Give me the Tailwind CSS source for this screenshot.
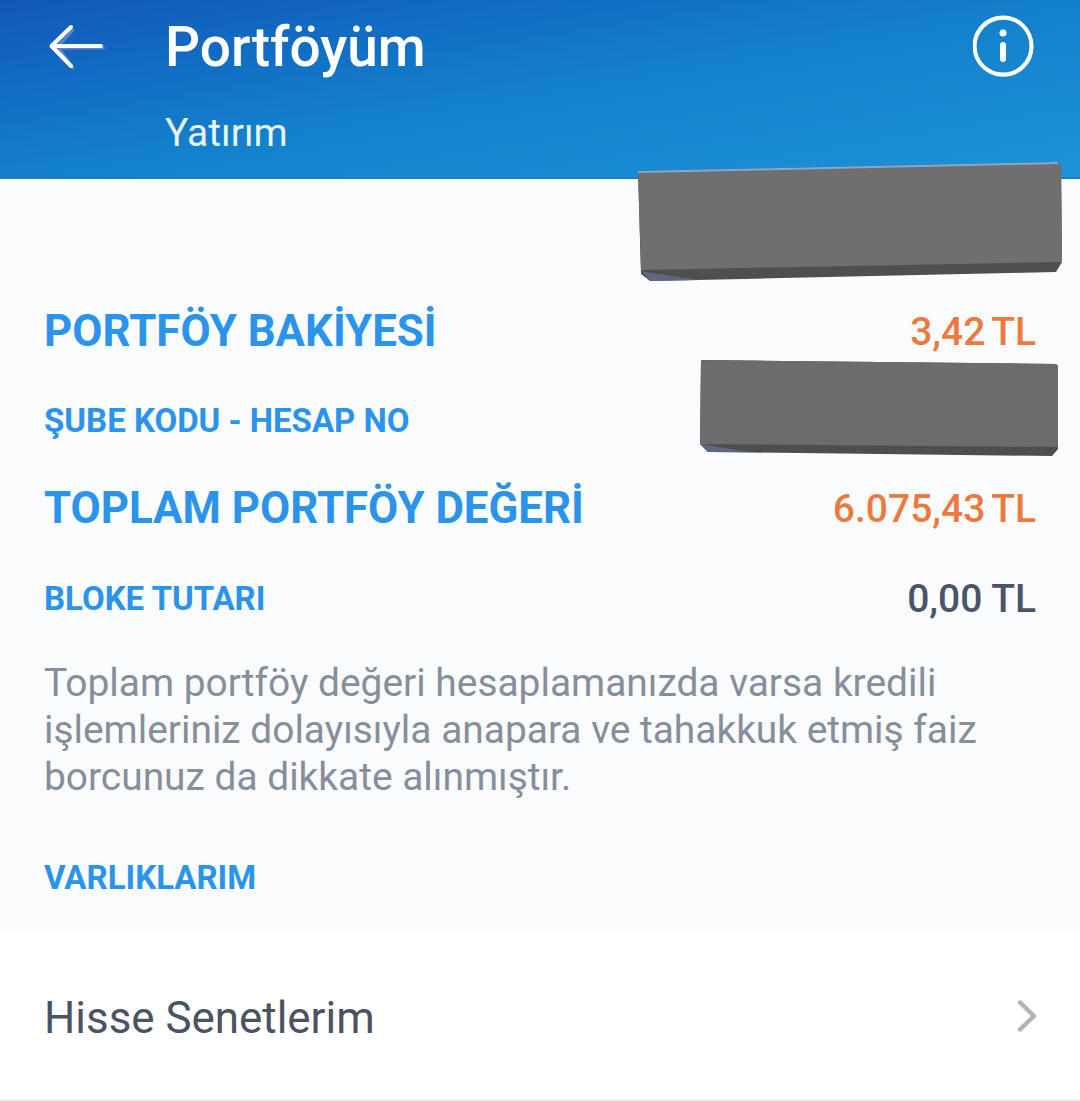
<!DOCTYPE html>
<html lang="tr">
	<head>
		<meta charset="UTF-8" />
		<meta name="viewport" content="width=device-width, initial-scale=1.0" />
		<title>Portföyüm</title>
		<script src="https://cdn.jsdelivr.net/npm/@tailwindcss/browser@4"></script>
	</head>
	<body class="bg-white font-['Roboto',sans-serif]">
		<div class="relative w-[1080px] h-[1101px] overflow-hidden">
			<!-- Header -->
			<header class="h-[179px] bg-gradient-to-br from-[#1257b8] via-[#1480cc] to-[#1c93d8] border-b-2 border-[#1b7fb8] flex items-start">
				<div class="w-[166px] pl-[46px] pt-[21px] shrink-0">
					<svg width="64" height="52" viewBox="0 0 64 52" fill="none" stroke-linecap="round" stroke-linejoin="round">
						<g stroke="#5b86cf" stroke-width="3">
							<path d="M57.500 27H12" />
							<path d="M27 9 12 25" />
							<path d="M14 29 27 47" />
						</g>
						<g stroke="#fff" stroke-width="4">
							<path d="M55 25H6" />
							<path d="M25 6 5.500 25 25 45" />
						</g>
					</svg>
				</div>
				<div class="flex-1 text-white">
					<h1 class="text-[55px] leading-[64px] font-medium mt-[15px] -ml-[1px]">Portföyüm</h1>
					<p class="text-[39px] leading-[44px] mt-[32px] text-[#e6f5ff] -ml-[1px]">Yatırım</p>
				</div>
				<div class="pr-[45px] pt-[15px]">
					<svg width="62" height="64" viewBox="0 0 62 64" fill="none">
						<circle cx="30.500" cy="32" r="28.500" stroke="#7fc0ea" stroke-width="3" />
						<circle cx="30" cy="31" r="28.500" stroke="#fff" stroke-width="4" />
						<circle cx="30" cy="18" r="3.500" fill="#fff" />
						<path d="M30 30v14" stroke="#fff" stroke-width="6" stroke-linecap="round" />
					</svg>
				</div>
			</header>

			<!-- Summary -->
			<main class="bg-[#f9fbfd] h-[753px] px-[44px] pt-[130px]">
				<div class="flex items-center justify-between h-[46px]">
					<span class="text-[43.800px] font-bold text-[#2a93ea]">PORTFÖY BAKİYESİ</span>
					<span class="text-[39px] font-medium text-[#ec7a3e] [word-spacing:-3px]">3,42 TL</span>
				</div>
				<div class="flex items-center justify-between h-[46px] mt-[43px]">
					<span class="text-[33px] font-bold text-[#2a93ea]">ŞUBE KODU - HESAP NO</span>
				</div>
				<div class="flex items-center justify-between h-[46px] mt-[42px]">
					<span class="text-[43.800px] font-bold text-[#2a93ea]">TOPLAM PORTFÖY DEĞERİ</span>
					<span class="text-[39px] font-medium text-[#ec7a3e] [word-spacing:-3px]">6.075,43 TL</span>
				</div>
				<div class="flex items-center justify-between h-[46px] mt-[44px]">
					<span class="text-[33px] font-bold text-[#2a93ea]">BLOKE TUTARI</span>
					<span class="text-[39px] font-medium text-[#4a5468]">0,00 TL</span>
				</div>
				<p class="text-[38.900px] leading-[47px] text-[#868e9c] mt-[37px]">
					Toplam portföy değeri hesaplamanızda varsa kredili<br />
					işlemleriniz dolayısıyla anapara ve tahakkuk etmiş faiz<br />
					borcunuz da dikkate alınmıştır.
				</p>
				<h2 class="text-[33px] leading-[46px] font-bold text-[#2a93ea] mt-[55px]">VARLIKLARIM</h2>
			</main>

			<!-- Holdings row -->
			<div class="h-[169px] bg-white border-b-2 border-[#eef0f2] flex items-center justify-between pl-[44px] pr-[43px]">
				<span class="text-[43.900px] text-[#4a5263] mt-[6px]">Hisse Senetlerim</span>
				<svg width="20" height="32" viewBox="0 0 20 32" fill="none" stroke="#b3b3b3" stroke-width="4.500" stroke-linecap="round" stroke-linejoin="round">
					<path d="M3 2.500 17 16 3 29.500" />
				</svg>
			</div>

			<!-- Redaction patches laid over the screenshot -->
			<svg class="absolute left-0 top-0 pointer-events-none blur-[0.7px]" width="1080" height="480" viewBox="0 0 1080 480">
				<path d="M638 171 1058 162 1061 163 1062 262 1056 272 650 281 641 274Z" fill="#4f4f4f" />
				<path d="M638 171 1058 162 1061 163 1062 262 641 270Z" fill="#6f6f6f" />
				<path d="M638 171 1058 162 1058 164 638 173Z" fill="#7fa9d4" />
				<path d="M641 270 650 281 700 280 645 272Z" fill="#5f6680" />
				<path d="M701 360 1056 364 1058 366 1058 449 1052 456 708 452 700 444Z" fill="#4e4e50" />
				<path d="M701 360 1056 364 1058 366 1058 447 700 444Z" fill="#6c6c6e" />
				<path d="M700 444 708 452 750 452 712 446Z" fill="#5f6680" />
			</svg>
		</div>
	</body>
</html>
